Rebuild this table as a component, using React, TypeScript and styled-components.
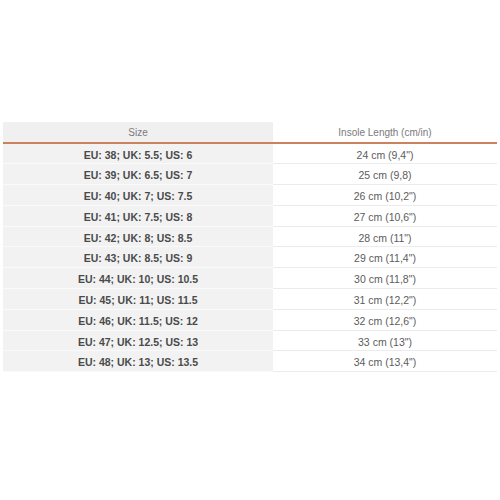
import React from 'react';
import styled, {createGlobalStyle} from 'styled-components';

const GlobalStyle = createGlobalStyle`
  html, body {
    margin: 0;
    padding: 0;
    background: #ffffff;
  }
  body {
    font-family: "Liberation Sans", Arial, sans-serif;
  }
`;

const Page = styled.div`
  width: 500px;
  height: 500px;
  padding: 122px 3px 0 3px;
  box-sizing: border-box;
`;

const Table = styled.table`
  width: 494px;
  border-collapse: collapse;
  table-layout: fixed;
  font-size: 10px;
`;

const HeadCell = styled.th<{ $shaded?: boolean }>`
  height: 21px;
  padding: 1px 0 0 0;
  font-weight: normal;
  color: #7a7a7a;
  text-align: center;
  background: ${p => (p.$shaded ? '#f0f0f0' : '#ffffff')};
  border-bottom: 2px solid #c9835f;
  box-sizing: border-box;
`;

const Cell = styled.td<{ $size?: boolean }>`
  height: 20.8px;
  padding: 2px 0 0 0;
  text-align: center;
  box-sizing: border-box;
  font-size: 10.5px;
  background: ${p => (p.$size ? '#f2f2f2' : '#ffffff')};
  color: ${p => (p.$size ? '#4a4a4a' : '#5c5c5c')};
  font-weight: ${p => (p.$size ? 'bold' : 'normal')};
  border-bottom: 1px solid ${p => (p.$size ? '#fafafa' : '#ececec')};
`;

const rows: [string, string][] = [
    ['EU: 38; UK: 5.5; US: 6', '24 cm (9,4")'],
    ['EU: 39; UK: 6.5; US: 7', '25 cm (9,8)'],
    ['EU: 40; UK: 7; US: 7.5', '26 cm (10,2")'],
    ['EU: 41; UK: 7.5; US: 8', '27 cm (10,6")'],
    ['EU: 42; UK: 8; US: 8.5', '28 cm (11")'],
    ['EU: 43; UK: 8.5; US: 9', '29 cm (11,4")'],
    ['EU: 44; UK: 10; US: 10.5', '30 cm (11,8")'],
    ['EU: 45; UK: 11; US: 11.5', '31 cm (12,2")'],
    ['EU: 46; UK: 11.5; US: 12', '32 cm (12,6")'],
    ['EU: 47; UK: 12.5; US: 13', '33 cm (13")'],
    ['EU: 48; UK: 13; US: 13.5', '34 cm (13,4")'],
];

export default function App() {
    return (
        <Page>
            <GlobalStyle/>
            <Table>
                <colgroup>
                    <col style={{width: '270px'}}/>
                    <col/>
                </colgroup>
                <thead>
                <tr>
                    <HeadCell $shaded>Size</HeadCell>
                    <HeadCell>Insole Length (cm/in)</HeadCell>
                </tr>
                </thead>
                <tbody>
                {rows.map(([size, length]) => (
                    <tr key={size}>
                        <Cell $size>{size}</Cell>
                        <Cell>{length}</Cell>
                    </tr>
                ))}
                </tbody>
            </Table>
        </Page>
    );
}
